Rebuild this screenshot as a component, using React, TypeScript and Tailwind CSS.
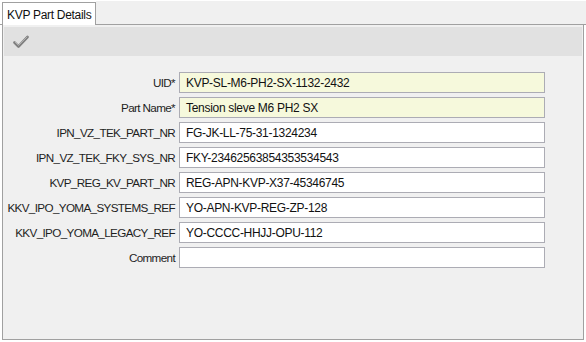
import React from 'react';

const fields = [
  { label: 'UID*', value: 'KVP-SL-M6-PH2-SX-1132-2432', required: true },
  { label: 'Part Name*', value: 'Tension sleve M6 PH2 SX', required: true },
  { label: 'IPN_VZ_TEK_PART_NR', value: 'FG-JK-LL-75-31-1324234' },
  { label: 'IPN_VZ_TEK_FKY_SYS_NR', value: 'FKY-23462563854353534543' },
  { label: 'KVP_REG_KV_PART_NR', value: 'REG-APN-KVP-X37-45346745' },
  { label: 'KKV_IPO_YOMA_SYSTEMS_REF', value: 'YO-APN-KVP-REG-ZP-128' },
  { label: 'KKV_IPO_YOMA_LEGACY_REF', value: 'YO-CCCC-HHJJ-OPU-112' },
  { label: 'Comment', value: '' },
];

export default function App() {
  return (
    <div className="w-[586px] h-[342px] bg-white text-[12px] tracking-[-0.3px] text-[#1a1a1a] font-['Liberation_Sans',Arial,sans-serif] flex flex-col">
      {/* tab strip */}
      <div className="flex h-[25px] shrink-0">
        <div className="w-[2px] border-b border-[#a0a0a0]" />
        <div className="mt-[2px] bg-white border-l border-t border-r border-[#a0a0a0] px-[4px] pt-[4px] leading-[16px] text-[#101010] whitespace-nowrap">
          KVP Part Details
        </div>
        <div className="flex-1 mt-[1px] bg-[#f0f0f0] border-b border-[#a0a0a0]" />
      </div>

      {/* panel */}
      <div className="mx-[2px] mb-[2px] flex-1 border-l border-r border-b border-[#a0a0a0] bg-[#f0f0f0] flex flex-col">
        <div className="mx-[1px] mt-[2px] h-[29px] bg-[#e1e1e1] flex items-center pl-[9px]">
          <svg width="16" height="14" viewBox="0 0 16 14">
            <path d="M1.5 7.5 L5.5 11.5 L14.5 2" fill="none" stroke="#7f7f7f" strokeWidth="2.6" strokeLinecap="round" strokeLinejoin="round" />
            <path d="M2 7 L5.5 10.5 L14 2" fill="none" stroke="#b0b0b0" strokeWidth="1" strokeLinecap="round" strokeLinejoin="round" />
          </svg>
        </div>

        <div className="flex flex-col gap-[4px] pt-[16px] pr-[38px]">
          {fields.map((f) => (
            <div key={f.label} className="flex items-center gap-[4px] h-[21px]">
              <div className="w-[172px] shrink-0 text-right whitespace-nowrap text-[11.7px] tracking-[-0.65px] text-[#1e1e1e]">
                {f.label}
              </div>
              <div
                className={`flex-1 h-[21px] border border-[#acacb4] flex items-center pl-[6px] text-[#111] whitespace-nowrap ${
                  f.required ? 'bg-[#f6f9dc]' : 'bg-white'
                }`}
              >
                {f.value}
              </div>
            </div>
          ))}
        </div>
      </div>
    </div>
  );
}
